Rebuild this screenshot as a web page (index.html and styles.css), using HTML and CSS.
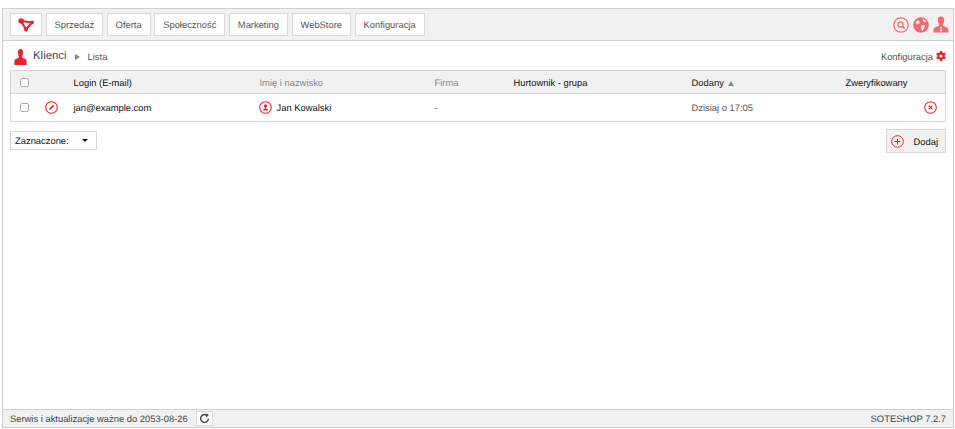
FILE: index.html
```html
<!DOCTYPE html>
<html lang="pl">
<head>
<meta charset="utf-8">
<title>Klienci - Lista</title>
<link rel="stylesheet" href="styles.css">
</head>
<body>
<div class="frame">
  <header class="topbar">
    <nav class="menu">
      <a class="menu-btn logo-btn" href="#"><svg width="16" height="14" viewBox="0 0 16 14"><g fill="#e8232f" stroke="#e8232f"><path d="M3 3 L14 4.5 L8 11.5 Z" fill="none" stroke-width="2"/><circle cx="3.2" cy="3" r="2.8" stroke="none"/><circle cx="14" cy="4.5" r="1.9" stroke="none"/><circle cx="8" cy="11.5" r="1.9" stroke="none"/></g></svg></a>
      <a class="menu-btn" href="#">Sprzedaż</a>
      <a class="menu-btn" href="#">Oferta</a>
      <a class="menu-btn" href="#">Społeczność</a>
      <a class="menu-btn" href="#">Marketing</a>
      <a class="menu-btn" href="#">WebStore</a>
      <a class="menu-btn" href="#">Konfiguracja</a>
    </nav>
    <div class="top-icons">
      <svg width="16" height="16" viewBox="0 0 16 16"><circle cx="8" cy="8" r="7.2" fill="none" stroke="#ee6b72" stroke-width="1.3"/><circle cx="7.4" cy="7.4" r="2.6" fill="none" stroke="#ee6b72" stroke-width="1.3"/><path d="M9.4 9.4 L11.6 11.6" stroke="#ee6b72" stroke-width="1.6"/></svg>
      <svg width="16" height="16" viewBox="0 0 16 16"><circle cx="8" cy="8" r="7.8" fill="#ee6b72"/><path d="M2.6 5 L5 3.4 L7 4.6 L5.8 7 L3.8 7.4 Z M8.6 8 L12 8.6 L11 11.6 L9.2 14 L8 11 Z M9.6 1.6 L13 4 L12.4 5.6 L10.4 4.4 Z" fill="#f1f1f1"/></svg>
      <svg width="16" height="17" viewBox="0 0 16 17"><path d="M8 0.5 C10.3 0.5 11.4 2.2 11.2 4.4 C11 6.6 10 8 9.8 9 C9.7 9.8 11 10.4 13 11 C15 11.7 15.6 12.8 15.6 16.5 L0.4 16.5 C0.4 12.8 1 11.7 3 11 C5 10.4 6.3 9.8 6.2 9 C6 8 5 6.6 4.8 4.4 C4.6 2.2 5.7 0.5 8 0.5 Z" fill="#ee6b72"/><path d="M7.2 11 L8.8 11 L8.5 12.6 L9 15.5 L7 15.5 L7.5 12.6 Z" fill="#f1f1f1"/></svg>
    </div>
  </header>

  <main class="content">
    <div class="titlebar">
      <div class="crumbs">
        <svg class="title-icon" width="13" height="16" viewBox="0 0 14 16" preserveAspectRatio="none"><path d="M7 0 C9 0 10 1.5 9.9 3.5 C9.8 5.5 8.9 6.8 8.8 7.8 C8.7 8.8 9.6 9.2 11 9.6 C13 10.2 13.6 11 13.6 13 L13.6 16 L0.4 16 L0.4 13 C0.4 11 1 10.2 3 9.6 C4.4 9.2 5.3 8.8 5.2 7.8 C5.1 6.8 4.2 5.5 4.1 3.5 C4 1.5 5 0 7 0 Z" fill="#e8232f"/></svg>
        <span class="crumb-main">Klienci</span>
        <span class="crumb-sep"></span>
        <span class="crumb-sub">Lista</span>
      </div>
      <a class="config-link" href="#">Konfiguracja <svg width="10" height="10" viewBox="0 0 10 10"><path d="M5 0 V10 M0.7 2.5 L9.3 7.5 M9.3 2.5 L0.7 7.5" stroke="#e8232f" stroke-width="2.4"/><circle cx="5" cy="5" r="3.7" fill="#e8232f"/><circle cx="5" cy="5" r="1.6" fill="#fff"/></svg></a>
    </div>

    <table class="grid">
      <colgroup>
        <col class="c-check"><col class="c-edit"><col class="c-login"><col class="c-name"><col class="c-firm"><col class="c-group"><col class="c-added"><col class="c-ver"><col class="c-del">
      </colgroup>
      <thead>
        <tr>
          <th class="cell-check"><span class="check"></span></th>
          <th></th>
          <th>Login (E-mail)</th>
          <th class="muted">Imię i nazwisko</th>
          <th class="muted">Firma</th>
          <th>Hurtownik - grupa</th>
          <th>Dodany <span class="sort-up"></span></th>
          <th>Zweryfikowany</th>
          <th></th>
        </tr>
      </thead>
      <tbody>
        <tr>
          <td class="cell-check"><span class="check"></span></td>
          <td class="cell-edit"><svg class="row-icon" width="13" height="13" viewBox="0 0 13 13"><circle cx="6.5" cy="6.5" r="5.8" fill="none" stroke="#e8232f" stroke-width="1.1"/><path d="M4 9 L4.6 7.2 L8 3.8 L9.2 5 L5.8 8.4 Z" fill="#e8232f"/></svg></td>
          <td>jan@example.com</td>
          <td><span class="person"><svg class="row-icon" width="13" height="13" viewBox="0 0 13 13"><circle cx="6.5" cy="6.5" r="5.8" fill="none" stroke="#e8232f" stroke-width="1.1"/><circle cx="6.5" cy="4.9" r="1.6" fill="#e8232f"/><path d="M6 6 H7 V7.4 L9 8.4 V9.4 H4 V8.4 L6 7.4 Z" fill="#e8232f"/></svg>Jan Kowalski</span></td>
          <td class="soft">-</td>
          <td></td>
          <td class="soft">Dzisiaj o 17:05</td>
          <td></td>
          <td class="cell-del"><svg class="row-icon" width="13" height="13" viewBox="0 0 13 13"><circle cx="6.5" cy="6.5" r="5.8" fill="none" stroke="#e8232f" stroke-width="1.1"/><path d="M4.6 4.6 L8.4 8.4 M8.4 4.6 L4.6 8.4" stroke="#e8232f" stroke-width="1.2"/></svg></td>
        </tr>
      </tbody>
    </table>

    <div class="actions">
      <button class="select-btn" type="button">Zaznaczone: <span class="caret"></span></button>
      <button class="add-btn" type="button"><svg width="13" height="13" viewBox="0 0 13 13"><circle cx="6.5" cy="6.5" r="5.8" fill="none" stroke="#e8232f" stroke-width="1"/><path d="M6.5 3.6 V9.4 M3.6 6.5 H9.4" stroke="#e8232f" stroke-width="1"/></svg><span>Dodaj</span></button>
    </div>
  </main>

  <footer class="footer">
    <div class="license">
      <span>Serwis i aktualizacje ważne do 2053-08-26</span>
      <span class="refresh"><svg width="11" height="11" viewBox="0 0 11 11"><path d="M9.4 5.5 A3.9 3.9 0 1 1 7.6 2.2" fill="none" stroke="#444" stroke-width="1.4"/><path d="M6.6 0.2 L10 2 L7 4.4 Z" fill="#444"/></svg></span>
    </div>
    <span class="version">SOTESHOP 7.2.7</span>
  </footer>
</div>
</body>
</html>
```
FILE: styles.css
```css
* { box-sizing: border-box; }
html, body { height: 100%; }
body {
  margin: 0;
  padding: 8px 1px 1px 2px;
  background: #fff;
  font-family: "Liberation Sans", Arial, sans-serif;
  font-size: 9.4px;
  text-rendering: geometricPrecision;
  color: #222;
}
a { color: inherit; text-decoration: none; }

.frame {
  height: 100%;
  display: flex;
  flex-direction: column;
  border: 1px solid #cfcfcf;
}

.topbar {
  height: 32px;
  flex: none;
  display: flex;
  justify-content: space-between;
  align-items: flex-start;
  padding: 4px 4px 0 7px;
  background: #f1f1f1;
  border-bottom: 1px solid #cfcfcf;
}
.menu { display: flex; gap: 3.5px; }
.menu-btn {
  height: 23px;
  display: flex;
  align-items: center;
  justify-content: center;
  padding: 0 8px;
  background: #fff;
  border: 1px solid #d9d9d9;
  color: #555;
}
.logo-btn { width: 32px; padding: 0; }
.top-icons { display: flex; gap: 4px; align-items: center; padding-top: 3px; }

.content { flex: 1; padding: 0 7px; background: #fff; }

.titlebar {
  height: 29px;
  padding-top: 1px;
  display: flex;
  justify-content: space-between;
  align-items: center;
}
.crumbs { display: flex; align-items: center; margin-left: 4px; }
.title-icon { margin: 2px 6px 0 0; }
.crumb-main { font-size: 11.4px; color: #444; }
.crumb-sep {
  width: 0;
  height: 0;
  margin: 1px 8px 0;
  border-left: 5px solid #888;
  border-top: 3px solid transparent;
  border-bottom: 3px solid transparent;
}
.crumb-sub { color: #555; margin-top: 1px; }
.config-link { color: #555; display: flex; align-items: center; gap: 3px; }

.grid {
  width: 100%;
  table-layout: fixed;
  border-collapse: collapse;
  border: 1px solid #d6d6d6;
}
.c-check { width: 34px; }
.c-edit { width: 29px; }
.c-login { width: 186px; }
.c-name { width: 175px; }
.c-firm { width: 79px; }
.c-group { width: 178px; }
.c-added { width: 154px; }
.c-ver { width: 72px; }
.grid th {
  height: 23px;
  padding: 0;
  background: #f1f1f1;
  border-bottom: 1px solid #d6d6d6;
  text-align: left;
  font-weight: normal;
  color: #111;
  white-space: nowrap;
}
.grid th.muted { color: #888; }
.grid td { height: 28px; padding: 0; color: #111; }
.grid td.soft { color: #555; }
.grid .cell-check { padding-left: 9px; }
.check {
  display: block;
  width: 9px;
  height: 9px;
  background: #fff;
  border: 1px solid #aaa;
  border-radius: 2px;
}
.row-icon { display: block; }
.person { display: flex; align-items: center; gap: 5px; margin-left: -1px; }
.grid .cell-del { padding-left: 6px; }
.sort-up {
  display: inline-block;
  width: 0;
  height: 0;
  margin-left: 2px;
  border-left: 3.5px solid transparent;
  border-right: 3.5px solid transparent;
  border-bottom: 5px solid #6f8fb5;
}

.actions {
  display: flex;
  justify-content: space-between;
  align-items: flex-start;
  padding-top: 8px;
}
.select-btn {
  width: 87px;
  height: 19px;
  margin-top: 1px;
  display: flex;
  align-items: center;
  justify-content: space-between;
  padding: 0 8px 0 4px;
  background: #fff;
  border: 1px solid #d6d6d6;
  font: 9.4px "Liberation Sans", Arial, sans-serif;
  text-rendering: geometricPrecision;
  color: #111;
}
.caret {
  width: 0;
  height: 0;
  border-left: 3px solid transparent;
  border-right: 3px solid transparent;
  border-top: 3px solid #111;
}
.add-btn {
  width: 60px;
  height: 24px;
  margin-top: -1px;
  display: flex;
  align-items: center;
  justify-content: space-between;
  padding: 0 7px 0 4px;
  background: #f1f1f1;
  border: 1px solid #d6d6d6;
  font: 9.4px "Liberation Sans", Arial, sans-serif;
  text-rendering: geometricPrecision;
  color: #111;
}

.footer {
  height: 18px;
  flex: none;
  display: flex;
  align-items: center;
  justify-content: space-between;
  padding: 0 7px;
  background: #f1f1f1;
  border-top: 1px solid #cfcfcf;
  color: #444;
}
.license { display: flex; align-items: center; gap: 8px; }
.refresh {
  width: 17px;
  height: 15px;
  display: flex;
  align-items: center;
  justify-content: center;
  background: #fff;
  border: 1px solid #d9d9d9;
}
```
